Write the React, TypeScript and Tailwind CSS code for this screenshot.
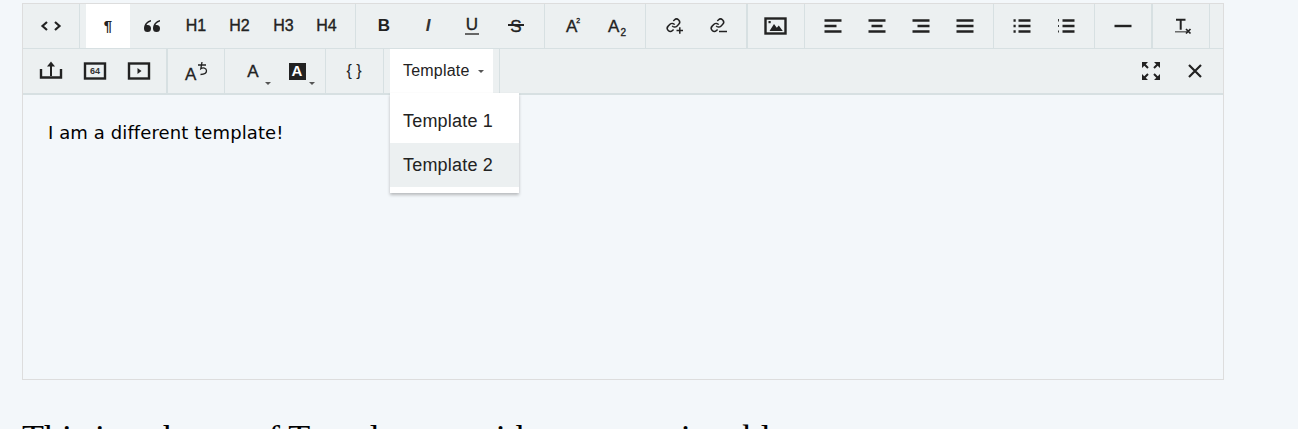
import type { ReactNode } from "react";

const Btn = ({ children, active }: { children?: ReactNode; active?: boolean }) => (
  <button className={`relative flex h-full w-[44px] shrink-0 items-center justify-center text-[#222] ${active ? "bg-white" : ""}`}>
    {children}
  </button>
);

const Group = ({ children, thick, last, className = "px-[6px]" }: { children?: ReactNode; thick?: boolean; last?: boolean; className?: string }) => (
  <div className={`flex h-full shrink-0 ${className} ${last ? "" : thick ? "border-r-2 border-[#d7e0e2]" : "border-r border-[#d7e0e2]"}`}>
    {children}
  </div>
);

const Icon = ({ children }: { children: ReactNode }) => (
  <svg width="24" height="24" viewBox="0 0 24 24" fill="none" stroke="#222" strokeWidth="2.4" className="overflow-visible">
    {children}
  </svg>
);

const Caret = () => (
  <span className="absolute bottom-[8px] right-[4px] h-0 w-0 border-x-[3px] border-t-[3px] border-x-transparent border-t-[#555]" />
);

const LinkIcon = ({ plus }: { plus?: boolean }) => (
  <Icon>
    <g transform="translate(4 3.800) scale(0.620)" strokeWidth="2.400">
      <path d="M10 13a5 5 0 0 0 7.540.540l3-3a5 5 0 0 0-7.070-7.070l-1.720 1.710" />
      <path d="M14 11a5 5 0 0 0-7.540-.540l-3 3a5 5 0 0 0 7.070 7.070l1.710-1.710" />
    </g>
    <path d={plus ? "M14.500 16.500h6.500" : "M13 17.500h8"} strokeWidth="1.500" />
    {plus && <path d="M17.800 13.300v6.500" strokeWidth="1.500" />}
  </Icon>
);

const BarsBtn = ({ d }: { d: string }) => (
  <Btn>
    <Icon>
      <path d={d} />
    </Icon>
  </Btn>
);

const Letter = ({ children, className = "" }: { children: ReactNode; className?: string }) => (
  <span className={`font-['Liberation_Sans',sans-serif] text-[16px] leading-none [-webkit-text-stroke:0.35px_#222] ${className}`}>{children}</span>
);

export default function App() {
  return (
    <div className="h-[429px] w-[1298px] overflow-hidden bg-[#f3f7fa] px-[22px] pt-[3px]">
      <div className="h-[377px] w-[1202px] border border-[#ddd]">
        <div className="bg-[#ecf0f1]">
          {/* first row */}
          <div className="flex h-[45px] border-b border-[#d7e0e2]">
            <Group>
              <Btn>
                <Icon><path d="M8 8l-4.500 4 4.500 4M16 8l4.500 4-4.500 4" strokeWidth="2.200" /></Icon>
              </Btn>
            </Group>
            <Group className="pl-[6px] pr-[5px]">
              <Btn active>
                <span className="font-['Liberation_Sans',sans-serif] text-[15px] font-bold text-[#222]">¶</span>
              </Btn>
              <Btn>
                <Icon>
                  <path fill="#222" stroke="none" d="M11 6C7 7 4 10 4 14.500a3.500 3.500 0 1 0 3.500-3.500c-.4 0-.7 0-1 .1C7 9.500 8.500 8.200 11 7.500zM20 6c-4 1-7 4-7 8.500a3.500 3.500 0 1 0 3.500-3.500c-.4 0-.7 0-1 .1.500-1.600 2-2.900 4.500-3.600z" />
                </Icon>
              </Btn>
              <Btn><Letter>H1</Letter></Btn>
              <Btn><Letter className="mr-[1px]">H2</Letter></Btn>
              <Btn><Letter className="mr-[1px]">H3</Letter></Btn>
              <Btn><Letter className="mr-[3px]">H4</Letter></Btn>
            </Group>
            <Group>
              <Btn><span className="font-['Liberation_Sans',sans-serif] text-[17px] font-bold text-[#222]">B</span></Btn>
              <Btn><span className="font-['Liberation_Sans',sans-serif] text-[17px] font-bold italic text-[#333]">I</span></Btn>
              <Btn><Letter className="border-b-2 border-[#666] px-[1px] !leading-[16px] !text-[17px]">U</Letter></Btn>
              <Btn>
                <span className="relative">
                  <Letter className="!text-[17px]">S</Letter>
                  <span className="absolute left-[-2px] right-[-2px] top-[10px] h-[1.500px] bg-[#222]" />
                </span>
              </Btn>
            </Group>
            <Group>
              <Btn><Letter className="!text-[17px]">A<sup className="ml-[-1px] align-[5px] text-[7px]">2</sup></Letter></Btn>
              <Btn><Letter className="!text-[17px]">A<sub className="ml-[1px] align-[-2px] text-[10px]">2</sub></Letter></Btn>
            </Group>
            <Group thick>
              <Btn><LinkIcon plus /></Btn>
              <Btn><LinkIcon /></Btn>
            </Group>
            <Group>
              <Btn>
                <Icon>
                  <rect x="1.500" y="4.500" width="20" height="15" fill="none" />
                  <path fill="#222" stroke="none" d="M5.500 17l4.500-7 2.800 3.800 2-2.400 4 5.600z" />
                  <rect x="4.500" y="7" width="2.200" height="2.200" fill="#222" stroke="none" />
                </Icon>
              </Btn>
            </Group>
            <Group>
              <BarsBtn d="M3.500 6.500h17M3.500 12h12M3.500 17.500h17" />
              <BarsBtn d="M3.500 6.500h17M6.500 12h11M3.500 17.500h17" />
              <BarsBtn d="M3.500 6.500h17M8.500 12h12M3.500 17.500h17" />
              <BarsBtn d="M3.500 6.500h17M3.500 12h17M3.500 17.500h17" />
            </Group>
            <Group>
              <BarsBtn d="M8.500 6.500h12M8.500 12h12M8.500 17.500h12M3.500 6.500h2.200M3.500 12h2.200M3.500 17.500h2.200" />
              <Btn>
                <Icon>
                  <path d="M8.500 6.500h12M8.500 12h12M8.500 17.500h12" />
                  <path d="M4.500 5v2.500M4.500 11v2M4.500 16.500v2" strokeWidth="0.900" />
                </Icon>
              </Btn>
            </Group>
            <Group thick>
              <BarsBtn d="M3.500 12h17" />
            </Group>
            <Group>
              <Btn>
                <Icon>
                  <path d="M7 5.800h9.500M11.700 5.800v10" strokeWidth="2" />
                  <path d="M6 17.800h12" strokeWidth="1.300" stroke="#555" />
                  <path d="M17 15l4.500 4.500M21.500 15L17 19.500" strokeWidth="1.700" />
                </Icon>
              </Btn>
            </Group>
          </div>

          {/* second row */}
          <div className="flex h-[46px] border-b-2 border-[#d7e0e2]">
            <Group thick className="pl-[6px] pr-[5px]">
              <Btn>
                <Icon>
                  <path d="M2 10v8.500h20V10" />
                  <path d="M12 17V6" strokeWidth="2" />
                  <path fill="#222" stroke="none" d="M12 2.500l4 5H8z" />
                </Icon>
              </Btn>
              <Btn>
                <Icon>
                  <rect x="2" y="4.500" width="20" height="15" />
                  <text x="12" y="15" textAnchor="middle" fontSize="9" fontWeight="700" fill="#333" stroke="none" fontFamily="Liberation Sans, sans-serif">64</text>
                </Icon>
              </Btn>
              <Btn>
                <Icon>
                  <rect x="2" y="4.500" width="20" height="15" />
                  <path fill="#222" stroke="none" d="M10.500 9l4 3-4 3z" />
                </Icon>
              </Btn>
            </Group>
            <Group>
              <Btn>
                <Icon>
                  <text x="1" y="21" fontSize="17" fill="#222" stroke="#222" strokeWidth="0.300" fontFamily="Liberation Sans, sans-serif">A</text>
                  <path d="M14 6h8M18 3l-1.200 6.800c2-1.500 5.700-1 5.700 2s-3 3.700-6 3.700" strokeWidth="1.300" />
                </Icon>
              </Btn>
            </Group>
            <Group>
              <Btn>
                <Letter className="!text-[17px]">A</Letter>
                <Caret />
              </Btn>
              <Btn>
                <span className="flex h-[17px] w-[17px] items-center justify-center bg-[#222] font-['Liberation_Sans',sans-serif] text-[15px] font-bold text-white">A</span>
                <Caret />
              </Btn>
            </Group>
            <Group className="pl-[6px] pr-[7px]">
              <Btn><span className="font-['Liberation_Sans',sans-serif] text-[16px] text-[#222]">{"{ }"}</span></Btn>
            </Group>
            <Group>
              <div className="relative flex h-full w-[103px] items-center bg-white pl-[13px] font-['Liberation_Sans',sans-serif] text-[16px] tracking-[0.2px] text-[#222]">
                Template
                <span className="ml-[8px] mt-[1px] h-0 w-0 border-x-[3px] border-t-[3px] border-x-transparent border-t-[#555]" />
                {/* dropdown menu */}
                <div className="absolute left-0 top-[44px] z-10 w-[129px] bg-white py-[6px] text-[18px] leading-[44px] shadow-[0_2px_3px_rgba(0,0,0,0.25)]">
                  <div className="h-[44px] pl-[13px]">Template 1</div>
                  <div className="h-[44px] bg-[#ecf0f1] pl-[13px]">Template 2</div>
                </div>
              </div>
            </Group>
            <div className="ml-auto flex h-full pr-[6px]">
              <Btn>
                <Icon>
                  <path d="M4 4l5 5M20 4l-5 5M4 20l5-5M20 20l-5-5" strokeWidth="2" />
                  <path fill="#222" stroke="none" d="M3 3h6L3 9zM21 3h-6l6 6zM3 21h6l-6-6zM21 21h-6l6-6z" />
                </Icon>
              </Btn>
              <Btn>
                <Icon><path d="M6 6l12 12M18 6L6 18" strokeWidth="2.200" /></Icon>
              </Btn>
            </div>
          </div>
        </div>
        <p className="px-[25px] pt-[26px] font-['DejaVu_Sans',sans-serif] text-[18px] leading-[24px] tracking-[0.1px] text-black">
          I am a different template!
        </p>
      </div>
      <h2 className="mt-[38px] whitespace-nowrap font-['Liberation_Serif',serif] text-[36px] font-normal leading-[40px] text-black">
        This is a theme of Template as with a custom in a blue
      </h2>
    </div>
  );
}
